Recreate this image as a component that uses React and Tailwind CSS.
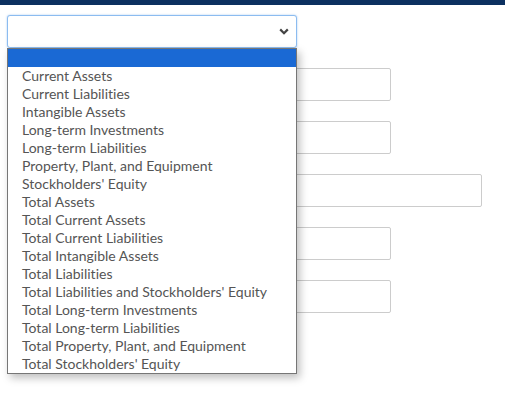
import React from "react";

const options = [
  "",
  "Current Assets",
  "Current Liabilities",
  "Intangible Assets",
  "Long-term Investments",
  "Long-term Liabilities",
  "Property, Plant, and Equipment",
  "Stockholders' Equity",
  "Total Assets",
  "Total Current Assets",
  "Total Current Liabilities",
  "Total Intangible Assets",
  "Total Liabilities",
  "Total Liabilities and Stockholders' Equity",
  "Total Long-term Investments",
  "Total Long-term Liabilities",
  "Total Property, Plant, and Equipment",
  "Total Stockholders' Equity",
];

const fields = ["w-[384px]", "w-[384px]", "w-[475px]", "w-[384px]", "w-[384px]"];

const App = () => {
  return (
    <div className="min-h-screen bg-white font-['Lato',sans-serif]">
      <div className="h-[5px] bg-[#0c3060]" />

      <div className="px-[7px] pt-[10px]">
        {/* account type select, open */}
        <div className="relative w-[290px]">
          <div className="flex h-[33px] items-center justify-end rounded-[3px] border border-[#8cbcf0] bg-white pr-[7px] shadow-[0_0_2px_rgba(100,160,230,0.6)]">
            <svg width="10" height="7" viewBox="0 0 10 7" className="text-[#444]">
              <path
                d="M1.2 1.4 L5 5.2 L8.8 1.4"
                fill="none"
                stroke="currentColor"
                strokeWidth="2.2"
              />
            </svg>
          </div>

          <div className="absolute left-0 top-full z-10 w-full border border-[#767676] bg-white shadow-[3px_4px_8px_rgba(0,0,0,0.25)]">
            {options.map((opt, i) => (
              <div
                key={i}
                className={`h-[18px] whitespace-nowrap pl-[14px] text-[14px] leading-[18px] text-[#555] [font-variant-ligatures:none] ${
                  i === 0 ? "bg-[#1a69d4]" : ""
                }`}
              >
                {opt}
              </div>
            ))}
          </div>
        </div>

        <div className="mt-[20px] flex flex-col gap-[20px]">
          {fields.map((w, i) => (
            <div
              key={i}
              className={`h-[33px] ${w} rounded-[2px] border border-[#cccccc] bg-white`}
            />
          ))}
        </div>
      </div>
    </div>
  );
};

export default App;
